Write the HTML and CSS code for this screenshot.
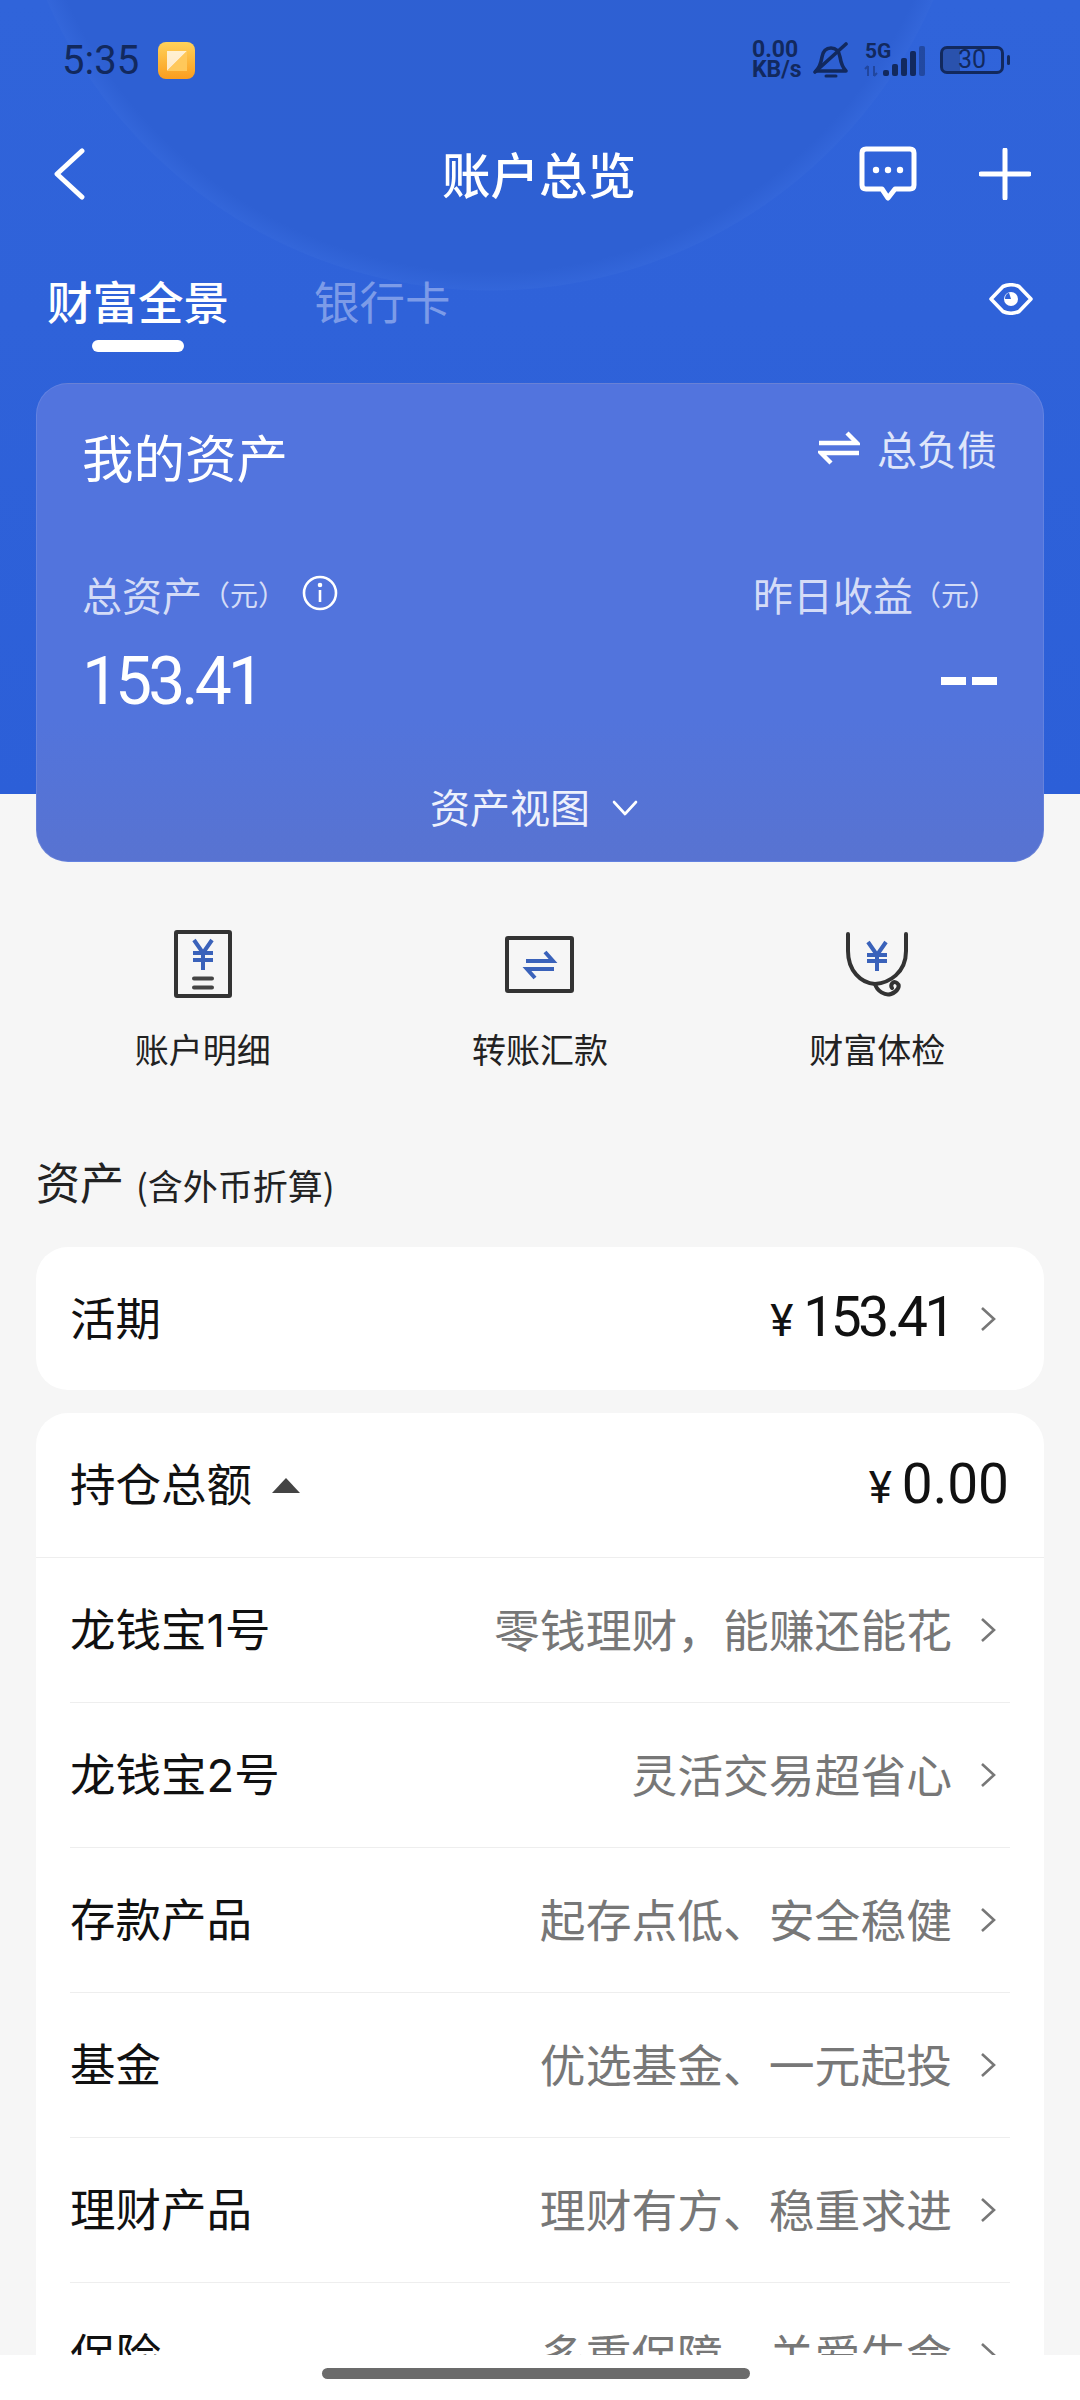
FILE: index.html
```html
<!DOCTYPE html>
<html lang="zh-CN">
<head>
    <meta charset="UTF-8">
    <meta name="viewport" content="width=device-width, initial-scale=1.0">
    <title>账户总览</title>
    <link rel="stylesheet" href="styles.css">
</head>
<body>
    <div class="content">
        <div class="hero">
            <div class="status">
                <div class="status-left">
                    <span class="clock">5:35</span>
                    <svg class="app-icon" viewBox="0 0 37 37">
                        <defs>
                            <linearGradient id="appFill" x1="0" y1="0" x2="0" y2="1">
                                <stop offset="0" stop-color="#ffd25a"/>
                                <stop offset="1" stop-color="#fb9d1e"/>
                            </linearGradient>
                        </defs>
                        <rect width="37" height="37" rx="8" fill="url(#appFill)"/>
                        <path d="M9 9H29L9 29Z" fill="#fff" opacity="0.75"/>
                        <path d="M29 9V29H9Z" fill="#ffc85a"/>
                    </svg>
                </div>
                <div class="status-right">
                    <div class="net-speed"><span>0.00</span><span>KB/s</span></div>
                    <svg class="bell" viewBox="0 0 36 37" fill="none" stroke="#12295e" stroke-width="3.6" stroke-linecap="round" stroke-linejoin="round">
                        <path d="M3 29H33C29 25 28 21 27 15C26 9 23 6 18 6C13 6 10 9 9 15C8 21 7 25 3 29Z"/>
                        <path d="M2 30L33 2"/>
                        <path d="M13 34H23" stroke-width="3"/>
                    </svg>
                    <svg class="signal" viewBox="0 0 62 36">
                        <text x="1" y="16" class="signal-text">5G</text>
                        <path d="M4 24V34M1 27L4 24M10 24V34M13 31L10 34" stroke="#12295e" stroke-width="2" fill="none" opacity="0.45"/>
                        <rect x="19" y="28" width="6" height="6" rx="2" fill="#12295e"/>
                        <rect x="28" y="22" width="6" height="12" rx="2" fill="#12295e"/>
                        <rect x="37" y="16" width="6" height="18" rx="2" fill="#12295e"/>
                        <rect x="46" y="9" width="6" height="25" rx="2" fill="#12295e"/>
                        <rect x="55" y="4" width="6" height="30" rx="2" fill="#12295e" opacity="0.45"/>
                    </svg>
                    <div class="battery">
                        <div class="battery-body">30</div>
                        <div class="battery-nub"></div>
                    </div>
                </div>
            </div>

            <div class="nav">
                <svg class="back" viewBox="0 0 32 54" fill="none" stroke="#fff" stroke-width="5" stroke-linecap="round" stroke-linejoin="round">
                    <path d="M29 3L3 27L29 51"/>
                </svg>
                <h1>账户总览</h1>
                <div class="nav-actions">
                    <svg class="msg" viewBox="0 0 58 56" fill="none">
                        <path d="M7 3H51Q55 3 55 7V39Q55 43 51 43H36L29 52L23 43H7Q3 43 3 39V7Q3 3 7 3Z" stroke="#fff" stroke-width="5" stroke-linejoin="round"/>
                        <circle cx="17" cy="24" r="3.2" fill="#fff"/>
                        <circle cx="29" cy="24" r="3.2" fill="#fff"/>
                        <circle cx="41" cy="24" r="3.2" fill="#fff"/>
                    </svg>
                    <svg class="plus" viewBox="0 0 52 52" stroke="#fff" stroke-width="5" stroke-linecap="round">
                        <path d="M26 2V50M2 26H50"/>
                    </svg>
                </div>
            </div>

            <div class="tabs">
                <div class="tab tab-active">财富全景<i class="tab-line"></i></div>
                <div class="tab">银行卡</div>
                <svg class="eye" viewBox="0 0 44 32" fill="none">
                    <path d="M2 16L14 3.5Q22 0 30 3.5L42 16L30 28.5Q22 32 14 28.5Z" stroke="#fff" stroke-width="3.6" stroke-linejoin="round"/>
                    <circle cx="22" cy="16" r="7" fill="#fff"/>
                    <path d="M20 9.5A7 7 0 0 0 16 16H22Z" fill="#2f62d8"/>
                </svg>
            </div>

            <div class="asset-card">
                <div class="card-top">
                    <div class="card-title">我的资产</div>
                    <div class="card-switch">
                        <svg class="swap" viewBox="0 0 42 34" fill="none" stroke="#fff" stroke-width="4.4">
                            <path d="M1 12H39L29 2"/>
                            <path d="M41 22H3L13 32"/>
                        </svg>
                        总负债
                    </div>
                </div>
                <div class="card-labels">
                    <div class="card-label">总资产<small>（元）</small>
                        <svg class="info" viewBox="0 0 36 36" fill="none" stroke="#fff" stroke-width="2.6">
                            <circle cx="18" cy="18" r="16"/>
                            <path d="M18 15V27"/>
                            <circle cx="18" cy="10" r="1" fill="#fff"/>
                        </svg>
                    </div>
                    <div class="card-label">昨日收益<small>（元）</small></div>
                </div>
                <div class="card-values">
                    <div class="card-amount">153.41</div>
                    <div class="card-dash"><i></i><i></i></div>
                </div>
                <div class="card-foot">
                    资产视图
                    <svg class="foot-arrow" viewBox="0 0 28 18" fill="none" stroke="#fff" stroke-width="2.6" stroke-linecap="round" stroke-linejoin="round">
                        <path d="M3 3L14 15L25 3"/>
                    </svg>
                </div>
            </div>
        </div>

        <div class="actions">
            <div class="action">
                <div class="action-icon">
                    <svg width="58" height="68" viewBox="0 0 58 68" fill="none">
                        <rect x="2" y="2" width="54" height="64" rx="1" stroke="#333" stroke-width="4"/>
                        <path d="M20 10L29 23L38 10M19 23H39M19 30H39M29 23V40" stroke="#3a62ba" stroke-width="4"/>
                        <path d="M20 48.5H38M20 57.5H38" stroke="#444" stroke-width="4" stroke-linecap="round"/>
                    </svg>
                </div>
                <div class="action-label">账户明细</div>
            </div>
            <div class="action">
                <div class="action-icon">
                    <svg width="69" height="57" viewBox="0 0 69 57" fill="none">
                        <rect x="2" y="2" width="65" height="53" rx="1" stroke="#333" stroke-width="4"/>
                        <path d="M21 25H48L40 16" stroke="#3a62ba" stroke-width="4"/>
                        <path d="M49 33H22L30 42" stroke="#3a62ba" stroke-width="4"/>
                    </svg>
                </div>
                <div class="action-label">转账汇款</div>
            </div>
            <div class="action">
                <div class="action-icon">
                    <svg width="64" height="66" viewBox="0 0 64 66" fill="none">
                        <path d="M3 3V20C3 40 16 52 30 53C44 52 61 42 61 20V3" stroke="#333" stroke-width="4" stroke-linecap="round"/>
                        <path d="M30 53C32 60 40 65 46 63C52 61 56 55 52 52C48 49 45 54 47 57" stroke="#333" stroke-width="4" stroke-linecap="round"/>
                        <path d="M23 11L32 24L41 11M22 24H42M22 30H42M32 24V40" stroke="#3a62ba" stroke-width="4"/>
                    </svg>
                </div>
                <div class="action-label">财富体检</div>
            </div>
        </div>

        <div class="section-title">资产<small>(含外币折算)</small></div>

        <div class="panel panel-single">
            <div class="panel-head">
                <span class="row-name">活期</span>
                <div class="row-right">
                    <span class="money"><small>¥</small><span class="money-tight">153.41</span></span>
                    <svg class="chev" viewBox="0 0 18 26" fill="none" stroke="#777" stroke-width="2.6"><path d="M3 2L15 13L3 24"/></svg>
                </div>
            </div>
        </div>

        <div class="panel">
            <div class="panel-head panel-head-line">
                <div class="row-left">
                    <span class="row-name">持仓总额</span>
                    <i class="caret"></i>
                </div>
                <span class="money money-end"><small>¥</small>0.00</span>
            </div>
            <div class="row">
                <span class="row-name">龙钱宝1号</span>
                <div class="row-right">
                    <span class="row-desc">零钱理财，能赚还能花</span>
                    <svg class="chev" viewBox="0 0 18 26" fill="none" stroke="#777" stroke-width="2.6"><path d="M3 2L15 13L3 24"/></svg>
                </div>
            </div>
            <div class="row">
                <span class="row-name">龙钱宝2号</span>
                <div class="row-right">
                    <span class="row-desc">灵活交易超省心</span>
                    <svg class="chev" viewBox="0 0 18 26" fill="none" stroke="#777" stroke-width="2.6"><path d="M3 2L15 13L3 24"/></svg>
                </div>
            </div>
            <div class="row">
                <span class="row-name">存款产品</span>
                <div class="row-right">
                    <span class="row-desc">起存点低、安全稳健</span>
                    <svg class="chev" viewBox="0 0 18 26" fill="none" stroke="#777" stroke-width="2.6"><path d="M3 2L15 13L3 24"/></svg>
                </div>
            </div>
            <div class="row">
                <span class="row-name">基金</span>
                <div class="row-right">
                    <span class="row-desc">优选基金、一元起投</span>
                    <svg class="chev" viewBox="0 0 18 26" fill="none" stroke="#777" stroke-width="2.6"><path d="M3 2L15 13L3 24"/></svg>
                </div>
            </div>
            <div class="row">
                <span class="row-name">理财产品</span>
                <div class="row-right">
                    <span class="row-desc">理财有方、稳重求进</span>
                    <svg class="chev" viewBox="0 0 18 26" fill="none" stroke="#777" stroke-width="2.6"><path d="M3 2L15 13L3 24"/></svg>
                </div>
            </div>
            <div class="row">
                <span class="row-name">保险</span>
                <div class="row-right">
                    <span class="row-desc">多重保障、关爱生命</span>
                    <svg class="chev" viewBox="0 0 18 26" fill="none" stroke="#777" stroke-width="2.6"><path d="M3 2L15 13L3 24"/></svg>
                </div>
            </div>
        </div>
    </div>

    <div class="home-bar"><div class="home-pill"></div></div>
</body>
</html>
```

FILE: styles.css
```css
* {
    box-sizing: border-box;
}
body {
    margin: 0;
    width: 1080px;
    height: 2400px;
    display: flex;
    flex-direction: column;
    overflow: hidden;
    background: #f6f6f6;
    color: #111;
    font-family: "Noto Sans CJK SC", "Noto Sans", Roboto, sans-serif;
}
.content {
    height: 2355px;
    overflow: hidden;
}
.hero {
    height: 861px;
    padding: 0 36px;
    background-image:
        radial-gradient(circle 484px at 490px -193px, #2e60d2 0, #2e60d3 96%, #3366da 99.8%, rgba(51, 102, 218, 0) 100%),
        linear-gradient(180deg, #3064da 0, #2f62d9 40%, #2c5fd8 100%);
    background-size: 100% 794px;
    background-repeat: no-repeat;
}

/* status bar */
.status {
    height: 120px;
    margin: 0 -36px;
    padding: 0 70px 0 62px;
    display: flex;
    align-items: center;
    justify-content: space-between;
    color: #12295e;
}
.status-left {
    display: flex;
    align-items: center;
    gap: 19px;
}
.clock {
    font-family: Roboto, sans-serif;
    font-size: 40px;
}
.app-icon {
    width: 37px;
    height: 37px;
}
.status-right {
    display: flex;
    align-items: center;
}
.net-speed {
    width: 52px;
    display: flex;
    flex-direction: column;
    font-family: Roboto, sans-serif;
    font-weight: 700;
    font-size: 23px;
    line-height: 20px;
}
.bell {
    width: 36px;
    height: 37px;
    margin-left: 9px;
}
.signal {
    width: 62px;
    height: 36px;
    margin-left: 15px;
}
.signal-text {
    font-family: Roboto, sans-serif;
    font-weight: 700;
    font-size: 21px;
    fill: #12295e;
}
.battery {
    display: flex;
    align-items: center;
    margin-left: 14px;
}
.battery-body {
    width: 64px;
    height: 28px;
    border: 3px solid #12295e;
    border-radius: 7px;
    background: linear-gradient(90deg, #2a52ad 30%, transparent 30%);
    font-family: Roboto, sans-serif;
    font-size: 25px;
    line-height: 22px;
    text-align: center;
}
.battery-nub {
    width: 3px;
    height: 10px;
    margin-left: 3px;
    border-radius: 2px;
    background: #12295e;
}

/* title bar */
.nav {
    height: 108px;
    margin: 0 -36px;
    padding: 0 49px 0 54px;
    display: flex;
    align-items: center;
    justify-content: space-between;
    position: relative;
}
.back {
    width: 31px;
    height: 52px;
}
.nav h1 {
    margin: -2px 0 0 -2px;
    position: absolute;
    left: 0;
    right: 0;
    text-align: center;
    color: #fff;
    font-size: 48.5px;
    font-weight: 500;
    line-height: 60px;
}
.nav-actions {
    display: flex;
    align-items: center;
    gap: 62px;
}
.msg {
    width: 58px;
    height: 56px;
}
.plus {
    width: 52px;
    height: 52px;
}

/* tabs */
.tabs {
    display: flex;
    align-items: flex-start;
    padding: 42px 11px 0;
    height: 155px;
    position: relative;
}
.tab {
    width: 183px;
    margin-right: 84px;
    font-size: 45.5px;
    line-height: 60px;
    color: #7c9be8;
}
.tab-active {
    color: #fff;
    font-weight: 500;
}
.tab-line {
    display: block;
    width: 92px;
    height: 12px;
    margin: 10px 0 0 45px;
    border-radius: 6px;
    background: #fff;
}
.eye {
    width: 44px;
    height: 32px;
    position: absolute;
    right: 11px;
    top: 55px;
}

/* assets card */
.asset-card {
    height: 479px;
    padding: 37px 46px 0 45px;
    border-radius: 32px;
    border: 1px solid rgba(255, 255, 255, 0.1);
    background: linear-gradient(180deg, #5274de 0, #5274dc 70%, #5873d1 100%);
    color: #fff;
}
.card-top {
    display: flex;
    justify-content: space-between;
    align-items: flex-start;
}
.card-title {
    font-size: 51.5px;
    line-height: 70px;
}
.card-switch {
    display: flex;
    align-items: center;
    gap: 17px;
    height: 54px;
    font-size: 40px;
    color: #dfe6fa;
}
.swap {
    width: 42px;
    height: 34px;
}
.card-labels {
    margin-top: 78px;
    display: flex;
    justify-content: space-between;
    align-items: center;
}
.card-label {
    display: flex;
    align-items: center;
    font-size: 40px;
    line-height: 50px;
    color: #d4dcf7;
}
.card-label small {
    font-size: 28px;
}
.info {
    width: 36px;
    height: 36px;
    margin: -2px 0 0 16px;
}
.card-values {
    margin-top: 22px;
    display: flex;
    justify-content: space-between;
    align-items: center;
    height: 80px;
}
.card-amount {
    font-family: Roboto, sans-serif;
    font-size: 66px;
    font-weight: 450;
    letter-spacing: -4px;
}
.card-dash {
    display: flex;
    gap: 6px;
}
.card-dash i {
    width: 25px;
    height: 8px;
    background: #fff;
}
.card-foot {
    margin-top: 55px;
    padding-right: 10px;
    display: flex;
    justify-content: center;
    align-items: center;
    gap: 21px;
    font-size: 40px;
    line-height: 60px;
    color: #eef1fc;
}
.foot-arrow {
    width: 28px;
    height: 18px;
    margin-top: 4px;
}

/* shortcuts */
.actions {
    padding: 67px 34px 0;
    display: grid;
    grid-template-columns: repeat(3, 1fr);
}
.action {
    display: flex;
    flex-direction: column;
    align-items: center;
}
.action-icon {
    height: 72px;
    display: flex;
    align-items: center;
    justify-content: center;
}
.action-label {
    margin-top: 27px;
    font-size: 34px;
    line-height: 44px;
    color: #222;
}

/* list */
.section-title {
    margin-top: 80px;
    padding-left: 36px;
    font-size: 44px;
    line-height: 60px;
    color: #222;
}
.section-title small {
    margin-left: 12px;
    font-size: 35px;
}
.panel {
    margin: 0 36px;
    border-radius: 32px;
    background: #fff;
    overflow: hidden;
}
.panel-single {
    margin-top: 32px;
    margin-bottom: 23px;
}
.panel-head {
    height: 143px;
    padding: 0 47px 0 34px;
    display: flex;
    align-items: center;
    justify-content: space-between;
}
.panel-head-line {
    height: 145px;
    padding-right: 35px;
    border-bottom: 1px solid #eee;
}
.row-left,
.row-right {
    display: flex;
    align-items: center;
}
.row-right {
    gap: 27px;
}
.row {
    height: 145px;
    margin: 0 34px;
    padding-right: 13px;
    display: flex;
    align-items: center;
    justify-content: space-between;
    border-bottom: 1px solid #eee;
}
.row-name {
    padding-top: 2px;
    font-family: Inter, "Noto Sans CJK SC", sans-serif;
    font-size: 45.5px;
    line-height: 60px;
    color: #111;
}
.row-desc {
    padding-bottom: 4px;
    font-size: 45.8px;
    line-height: 60px;
    color: #777;
}
.chev {
    width: 18px;
    height: 26px;
}
.caret {
    width: 0;
    height: 0;
    margin-left: 20px;
    border-left: 14px solid transparent;
    border-right: 14px solid transparent;
    border-bottom: 15px solid #444;
}
.money {
    padding-top: 1px;
    font-family: Roboto, sans-serif;
    font-size: 55px;
    line-height: 60px;
    color: #111;
}
.money small {
    margin-right: 10px;
    font-size: 44px;
}
.money-tight {
    letter-spacing: -3.4px;
}

.home-bar {
    height: 45px;
    padding-top: 13px;
    background: #fff;
}
.home-pill {
    width: 428px;
    height: 11px;
    margin-left: 322px;
    border-radius: 6px;
    background: #6b6b6b;
}
```
